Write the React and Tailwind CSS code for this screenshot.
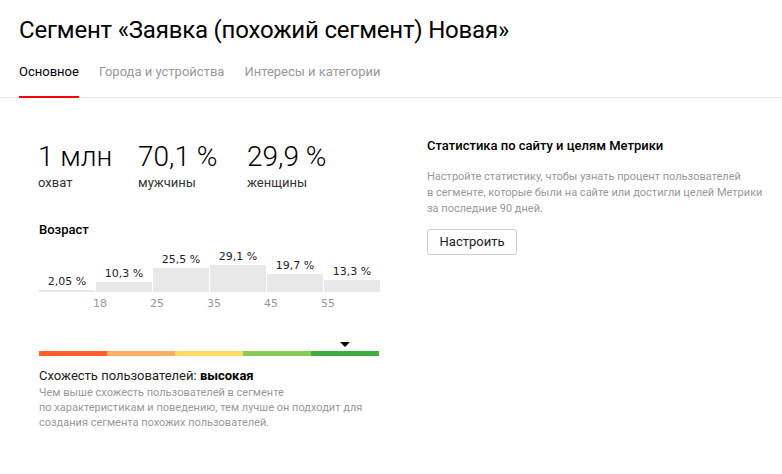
const ages = [
  { value: 2.05, label: '2,05 %' },
  { value: 10.3, label: '10,3 %' },
  { value: 25.5, label: '25,5 %' },
  { value: 29.1, label: '29,1 %' },
  { value: 19.7, label: '19,7 %' },
  { value: 13.3, label: '13,3 %' },
];

const ticks = ['', '18', '25', '35', '45', '55'];

const scale = ['bg-[#ff5f2d]', 'bg-[#fdad60]', 'bg-[#ffdc62]', 'bg-[#88cc55]', 'bg-[#3eaf3e]'];

function Metric({ value, caption, width }) {
  return (
    <div className={width}>
      <div className="text-[28px] font-light leading-[32px] text-black">{value}</div>
      <div className="mt-[2px] text-[13px] leading-4 text-[#333]">{caption}</div>
    </div>
  );
}

export default function App() {
  return (
    <div className="min-h-[474px] w-[782px] bg-white font-['Roboto',sans-serif] text-black">
      <header className="px-[19px] pt-[16px]">
        <h1 className="text-[24px] font-normal leading-[28px] tracking-[-0.2px]">
          Сегмент «Заявка (похожий сегмент) Новая»
        </h1>
      </header>

      <nav className="mt-[18px] flex gap-5 border-b border-[#e8e8e8] px-[19px] text-[13px] leading-5">
        <div className="-mb-px border-b-2 border-[#f00] pb-[14px] text-black">Основное</div>
        <div className="pb-[14px] text-[#999]">Города и устройства</div>
        <div className="pb-[14px] text-[#999]">Интересы и категории</div>
      </nav>

      <main className="flex pt-[43px] pl-[38px]">
        <section className="w-[342px]">
          <div className="flex">
            <Metric value="1 млн" caption="охват" width="w-[100px]" />
            <Metric value="70,1 %" caption="мужчины" width="w-[109px]" />
            <Metric value="29,9 %" caption="женщины" width="w-[110px]" />
          </div>

          <h2 className="ml-px mt-[31px] text-[13px] font-medium leading-4">Возраст</h2>

          <div className="ml-px mt-[12px] grid w-[341px] grid-cols-6 items-end gap-px font-['DejaVu_Sans',sans-serif] text-[11px]">
            {ages.map((a) => (
              <div key={a.label} className="flex flex-col items-center">
                <div className="mb-[2px] leading-[13px] text-[#222]">{a.label}</div>
                <div
                  className="w-full bg-[#e8e8e8]"
                  style={{ height: Math.max(1, Math.round(a.value * 0.93)) }}
                />
              </div>
            ))}
          </div>

          <div className="ml-px mt-[5px] grid w-[341px] grid-cols-6 gap-px font-['DejaVu_Sans',sans-serif] text-[11px] leading-[13px] text-[#999]">
            {ticks.map((t, i) => (
              <div key={i} className="-ml-[3px]">{t}</div>
            ))}
          </div>

          <div className="relative ml-px mt-[41px] flex h-[5px] w-[340px]">
            {scale.map((c) => (
              <div key={c} className={`h-full flex-1 ${c}`} />
            ))}
            <div className="absolute -top-[9px] left-[301px] h-0 w-0 border-x-[5px] border-t-[5px] border-x-transparent border-t-black" />
          </div>

          <p className="ml-px mt-[12px] text-[13px] leading-4 text-[#222]">
            Схожесть пользователей: <span className="font-bold text-black">высокая</span>
          </p>
          <p className="ml-px mt-px text-[11px] leading-[15px] text-[#999]">
            Чем выше схожесть пользователей в сегменте
            <br />
            по характеристикам и поведению, тем лучше он подходит для
            <br />
            создания сегмента похожих пользователей.
          </p>
        </section>

        <aside className="ml-[47px]">
          <h2 className="-mt-[3px] text-[13px] font-medium leading-4">
            Статистика по сайту и целям Метрики
          </h2>
          <p className="mt-[15px] text-[11px] leading-4 text-[#999]">
            Настройте статистику, чтобы узнать процент пользователей
            <br />
            в сегменте, которые были на сайте или достигли целей Метрики
            <br />
            за последние 90 дней.
          </p>
          <button className="mt-[12px] h-[26px] w-[90px] rounded-[3px] border border-[#d0d0d0] bg-white text-[13px] text-[#222]">
            Настроить
          </button>
        </aside>
      </main>
    </div>
  );
}
